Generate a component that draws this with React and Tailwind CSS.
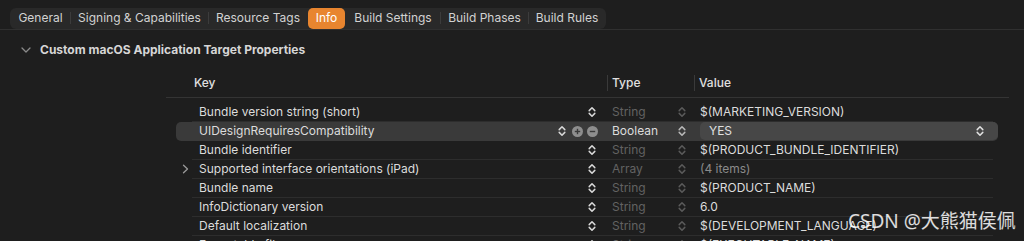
import React from "react";

const FONT = { fontFamily: 'Inter, "Noto Sans", sans-serif' };

function Stepper({ color = "#d8d8d8" }) {
  return (
    <svg width="8" height="12" viewBox="0 0 8 12" fill="none">
      <path d="M1.2 4.6 L4 1.8 L6.8 4.6" stroke={color} strokeWidth="1.5" strokeLinecap="round" strokeLinejoin="round" />
      <path d="M1.2 7.4 L4 10.2 L6.8 7.4" stroke={color} strokeWidth="1.5" strokeLinecap="round" strokeLinejoin="round" />
    </svg>
  );
}

function CircleBtn({ plus }) {
  return (
    <svg width="11" height="11" viewBox="0 0 11 11">
      <circle cx="5.5" cy="5.5" r="5.5" fill="#8e8e8e" />
      <path d="M2.8 5.5 H8.2" stroke="#3a3a3a" strokeWidth="1.4" />
      {plus && <path d="M5.5 2.8 V8.2" stroke="#3a3a3a" strokeWidth="1.4" />}
    </svg>
  );
}

const tabs = [
  { label: "General", w: "w-[61px]" },
  { label: "Signing & Capabilities", w: "w-[139px]" },
  { label: "Resource Tags", w: "w-[100px]" },
  { label: "Info", w: "w-[37px]", active: true },
  { label: "Build Settings", w: "w-[96px]" },
  { label: "Build Phases", w: "w-[89px]" },
  { label: "Build Rules", w: "w-[78px]" },
];

const rows = [
  { key: "Bundle version string (short)", type: "String", value: "$(MARKETING_VERSION)" },
  { key: "UIDesignRequiresCompatibility", type: "Boolean", value: "YES", selected: true },
  { key: "Bundle identifier", type: "String", value: "$(PRODUCT_BUNDLE_IDENTIFIER)" },
  { key: "Supported interface orientations (iPad)", type: "Array", value: "(4 items)", expand: true, dimValue: true },
  { key: "Bundle name", type: "String", value: "$(PRODUCT_NAME)" },
  { key: "InfoDictionary version", type: "String", value: "6.0" },
  { key: "Default localization", type: "String", value: "$(DEVELOPMENT_LANGUAGE)" },
  { key: "Executable file", type: "String", value: "$(EXECUTABLE_NAME)" },
];

function Row({ r }) {
  return (
    <div className={`flex flex-col h-[19px] shrink-0 ${r.selected ? "bg-[#3a3a3a] rounded-[5px]" : ""}`}>
      <div className="flex flex-1 items-center">
        <div className="w-[431px] flex items-center h-full">
          <div className="w-[23px] flex items-center pl-[6px] shrink-0">
            {r.expand && (
              <svg width="7" height="10" viewBox="0 0 7 10" fill="none">
                <path d="M1.5 1.2 L5.5 5 L1.5 8.8" stroke="#9a9a9a" strokeWidth="1.3" strokeLinecap="round" strokeLinejoin="round" />
              </svg>
            )}
          </div>
          <span className="flex-1 text-[12px] text-[#dcdcdc] whitespace-nowrap">{r.key}</span>
          {r.selected ? (
            <div className="flex items-center pr-[9px]">
              <Stepper />
              <div className="ml-[6px]"><CircleBtn plus /></div>
              <div className="ml-[4px]"><CircleBtn /></div>
            </div>
          ) : (
            <div className="flex items-center pr-[11px]">
              <Stepper />
            </div>
          )}
        </div>
        <div className="w-[87px] flex items-center justify-between pl-[5px] pr-[8px] h-full">
          <span className={`text-[12px] whitespace-nowrap ${r.selected ? "text-[#dcdcdc]" : "text-[#626262]"}`}>{r.type}</span>
          <Stepper color={r.selected ? "#b8b8b8" : "#5a5a5a"} />
        </div>
        {r.selected ? (
          <div className="flex-1 h-full flex items-center justify-between bg-[#474747] rounded-[5px] pl-[9px] pr-[14px] ml-[6px]">
            <span className="text-[12px] text-[#e0e0e0]">YES</span>
            <Stepper color="#e0e0e0" />
          </div>
        ) : (
          <div className="flex-1 flex items-center pl-[6px] h-full">
            <span className={`text-[12px] whitespace-nowrap ${r.dimValue ? "text-[#8a8a8a]" : "text-[#dcdcdc]"}`}>{r.value}</span>
          </div>
        )}
      </div>
      <div className={`h-px ml-[16px] mr-[5px] ${r.selected ? "bg-transparent" : "bg-[#2d2d2d]"}`} />
    </div>
  );
}

export default function App() {
  return (
    <div className="w-[1024px] h-[241px] overflow-hidden bg-[#1e1e1e] relative" style={FONT}>
      <div className="h-[30px] border-b border-[#303030] pt-[4px] pl-[10px]">
        <div className="inline-flex h-[21px] items-center bg-[#292929] rounded-[6px]">
          {tabs.map((t, i) => {
            const next = tabs[i + 1];
            const showSep = next && !t.active && !next.active;
            return (
              <React.Fragment key={t.label}>
                <div
                  className={`${t.w} h-full flex items-center justify-center text-[12px] whitespace-nowrap ${
                    t.active ? "bg-[#e8852f] text-white rounded-[5px]" : "text-[#d2d2d2]"
                  }`}
                >
                  {t.label}
                </div>
                {showSep && <div className="w-px h-[12px] bg-[#3c3c3c] -mx-px" />}
              </React.Fragment>
            );
          })}
        </div>
      </div>

      <div className="h-[39px] flex items-center pl-[21px]">
        <svg width="10" height="6" viewBox="0 0 10 6" fill="none">
          <path d="M1 1 L5 5 L9 1" stroke="#8a8a8a" strokeWidth="1.3" strokeLinecap="round" strokeLinejoin="round" />
        </svg>
        <span className="ml-[9px] text-[12px] font-bold text-[#d6d6d6] whitespace-nowrap">
          Custom macOS Application Target Properties
        </span>
      </div>

      <div className="ml-[176px] w-[822px] flex flex-col">
        <div className="-ml-[10px] w-[843px] h-[29px] border-b border-[#343434] flex items-center">
          <div className="w-[441px] pl-[28px] text-[12px] font-medium text-[#e0e0e0]">Key</div>
          <div className="w-[87px] flex items-center h-[16px] border-l border-[#3a3a3a] pl-[4px] text-[12px] font-medium text-[#e0e0e0]">Type</div>
          <div className="flex-1 flex items-center h-[16px] border-l border-[#3a3a3a] pl-[4px] text-[12px] font-medium text-[#e0e0e0]">Value</div>
        </div>
        <div className="h-[5px]" />
        {rows.map((r) => (
          <Row key={r.key} r={r} />
        ))}
      </div>

      <div
        className="absolute left-[848px] top-[212px] text-[19px] text-white/85 whitespace-nowrap leading-none"
        style={{ fontFamily: '"Noto Sans", "Noto Sans CJK SC", sans-serif' }}
      >
        CSDN @大熊猫侯佩
      </div>
    </div>
  );
}
